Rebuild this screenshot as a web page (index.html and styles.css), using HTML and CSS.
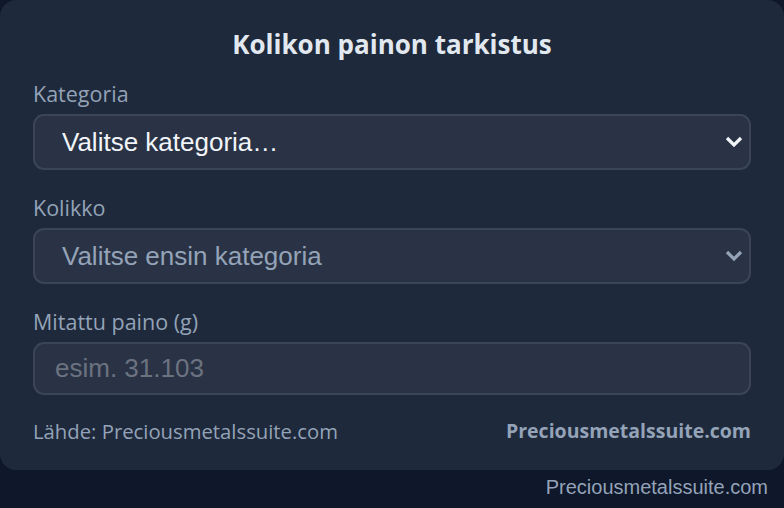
FILE: index.html
```html
<!DOCTYPE html>
<html lang="fi">

<head>
    <meta charset="UTF-8">
    <title>Kolikon painon tarkistus</title>
    <link rel="stylesheet" href="styles.css">
</head>

<body>

    <main class="card">
        <h1 class="card-title">Kolikon painon tarkistus</h1>

        <div class="field">
            <label class="field-label" for="kategoria">Kategoria</label>
            <select id="kategoria" class="field-select">
                <option>Valitse kategoria…</option>
            </select>
        </div>

        <div class="field">
            <label class="field-label" for="kolikko">Kolikko</label>
            <select id="kolikko" class="field-select field-select--off" disabled>
                <option>Valitse ensin kategoria</option>
            </select>
        </div>

        <div class="field field--last">
            <label class="field-label" for="paino">Mitattu paino (g)</label>
            <input id="paino" class="field-input" type="text" placeholder="esim. 31.103">
        </div>

        <div class="card-foot">
            <span>Lähde: Preciousmetalssuite.com</span>
            <span class="card-foot-brand">Preciousmetalssuite.com</span>
        </div>
    </main>

    <p class="page-credit">Preciousmetalssuite.com</p>

</body>

</html>
```

FILE: styles.css
```css
body {
    margin: 0;
    background-color: #0f172a;
    font-family: "Liberation Sans", Arial, sans-serif;
}

.card {
    background-color: #1e293b;
    border-radius: 16px;
    padding: 30px 33px 27px;
    font-family: "Segoe UI", "Open Sans", sans-serif;
}

.card-title {
    margin: 0 0 23px;
    text-align: center;
    font-size: 26px;
    line-height: 29px;
    font-weight: 700;
    color: #e2e8f0;
}

.field {
    margin-bottom: 26px;
}

.field--last {
    margin-bottom: 24px;
}

.field-label {
    display: block;
    margin-bottom: 8px;
    font-size: 21.5px;
    line-height: 24px;
    color: #94a3b8;
}

.field-select,
.field-input {
    display: block;
    width: 100%;
    box-sizing: border-box;
    border: 2px solid #3b4558;
    border-radius: 11px;
    background-color: #2a3345;
    font-family: "Liberation Sans", Arial, sans-serif;
    font-size: 26px;
    outline: none;
}

.field-select {
    height: 56px;
    padding: 0 50px 0 27px;
    color: #f1f5f9;
    appearance: none;
    -webkit-appearance: none;
    background-image: url("data:image/svg+xml,%3Csvg xmlns='http://www.w3.org/2000/svg' width='18' height='12' viewBox='0 0 18 12'%3E%3Cpath d='M2 2l7 7 7-7' fill='none' stroke='%23f1f5f9' stroke-width='3.2'/%3E%3C/svg%3E");
    background-repeat: no-repeat;
    background-position: right 6px center;
}

.field-select--off {
    color: #94a3b8;
    opacity: 1;
    background-image: url("data:image/svg+xml,%3Csvg xmlns='http://www.w3.org/2000/svg' width='18' height='12' viewBox='0 0 18 12'%3E%3Cpath d='M2 2l7 7 7-7' fill='none' stroke='%2394a3b8' stroke-width='3.2'/%3E%3C/svg%3E");
}

.field-input {
    height: 53px;
    padding: 0 20px;
    color: #f1f5f9;
}

.field-input::placeholder {
    color: #6b7280;
}

.card-foot {
    display: flex;
    justify-content: space-between;
    font-size: 20.3px;
    line-height: 24px;
    color: #94a3b8;
}

.card-foot-brand {
    font-size: 19.5px;
    font-weight: 700;
}

.page-credit {
    margin: 6px 16px 0;
    text-align: right;
    font-size: 20px;
    color: #94a3b8;
}
```
